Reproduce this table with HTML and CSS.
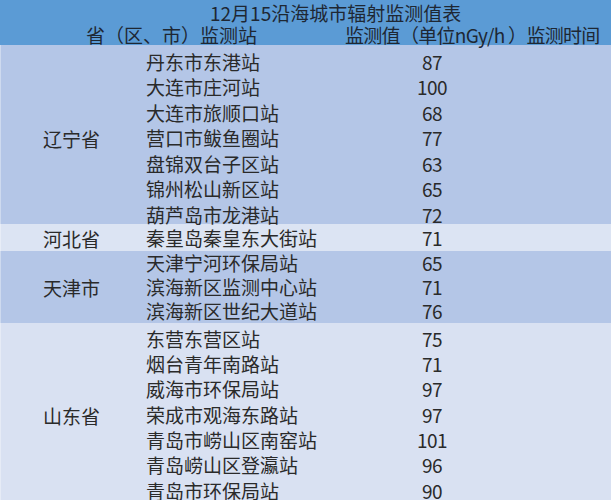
FILE: index.html
```html
<!DOCTYPE html>
<html lang="zh-CN">
<head>
<meta charset="utf-8">
<title>12月15沿海城市辐射监测值表</title>
<link rel="stylesheet" href="styles.css">
</head>
<body>
<div class="sheet">
  <div class="head">
    <div class="title">12月15沿海城市辐射监测值表</div>
    <div class="cols"><span class="c-st">省（区、市）监测站</span><span class="c-val">监测值（单位nGy/h ）监测时间</span></div>
  </div>

  <div class="group g-ln">
    <div class="prov">辽宁省</div>
    <div class="rows">
      <div class="row"><span class="st">丹东市东港站</span><span class="val">87</span></div>
      <div class="row"><span class="st">大连市庄河站</span><span class="val">100</span></div>
      <div class="row"><span class="st">大连市旅顺口站</span><span class="val">68</span></div>
      <div class="row"><span class="st">营口市鲅鱼圈站</span><span class="val">77</span></div>
      <div class="row"><span class="st">盘锦双台子区站</span><span class="val">63</span></div>
      <div class="row"><span class="st">锦州松山新区站</span><span class="val">65</span></div>
      <div class="row"><span class="st">葫芦岛市龙港站</span><span class="val">72</span></div>
    </div>
  </div>

  <div class="group g-hb">
    <div class="prov">河北省</div>
    <div class="rows">
      <div class="row"><span class="st">秦皇岛秦皇东大街站</span><span class="val">71</span></div>
    </div>
  </div>

  <div class="group g-tj">
    <div class="prov">天津市</div>
    <div class="rows">
      <div class="row"><span class="st">天津宁河环保局站</span><span class="val">65</span></div>
      <div class="row"><span class="st">滨海新区监测中心站</span><span class="val">71</span></div>
      <div class="row"><span class="st">滨海新区世纪大道站</span><span class="val">76</span></div>
    </div>
  </div>

  <div class="group g-sd">
    <div class="prov">山东省</div>
    <div class="rows">
      <div class="row"><span class="st">东营东营区站</span><span class="val">75</span></div>
      <div class="row"><span class="st">烟台青年南路站</span><span class="val">71</span></div>
      <div class="row"><span class="st">威海市环保局站</span><span class="val">97</span></div>
      <div class="row"><span class="st">荣成市观海东路站</span><span class="val">97</span></div>
      <div class="row"><span class="st">青岛市崂山区南窑站</span><span class="val">101</span></div>
      <div class="row"><span class="st">青岛崂山区登瀛站</span><span class="val">96</span></div>
      <div class="row"><span class="st">青岛市环保局站</span><span class="val">90</span></div>
    </div>
  </div>
</div>
</body>
</html>
```

FILE: styles.css
```css
html, body {
  margin: 0;
  padding: 0;
  background: #d9e1f2;
}

.sheet {
  width: 611px;
  font-family: "Noto Sans CJK SC", "Noto Sans", sans-serif;
  font-size: 19px;
  color: #2a2a2a;
}

.head {
  background: #5b9bd5;
  height: 45px;
  color: #1e2733;
}

.title {
  height: 24px;
  line-height: 26px;
  padding-left: 210px;
  white-space: nowrap;
}

.cols {
  display: flex;
  height: 21px;
  line-height: 21px;
  padding-left: 86px;
  white-space: nowrap;
}

.c-st {
  width: 259px;
}

.c-val {
  letter-spacing: -0.7px;
}

.group {
  display: flex;
  border-left: 1px solid rgba(255, 255, 255, 0.35);
}

.prov {
  width: 145px;
  box-sizing: border-box;
  padding-left: 42px;
  display: flex;
  align-items: center;
  line-height: 19px;
}

.rows {
  flex: 1;
}

.row {
  display: flex;
  align-items: flex-end;
  line-height: 19px;
  box-sizing: border-box;
  white-space: nowrap;
}

.st {
  width: 226px;
}

.val {
  width: 120px;
  text-align: center;
  letter-spacing: -0.5px;
}

.g-ln { background: #b4c6e7; }
.g-ln .row { height: 25.5px; }
.g-ln .prov { padding-top: 9px; }

.g-hb { background: #dce4f3; }
.g-hb .row { height: 27px; padding-bottom: 3.5px; }
.g-hb .prov { padding-top: 3px; }

.g-tj { background: #b4c6e7; }
.g-tj .row { height: 24px; padding-bottom: 2.5px; }
.g-tj .prov { padding-top: 2px; }

.g-sd { background: #d9e1f2; }
.g-sd .row { height: 25.3px; }
.g-sd .prov { padding-top: 9px; }
```
